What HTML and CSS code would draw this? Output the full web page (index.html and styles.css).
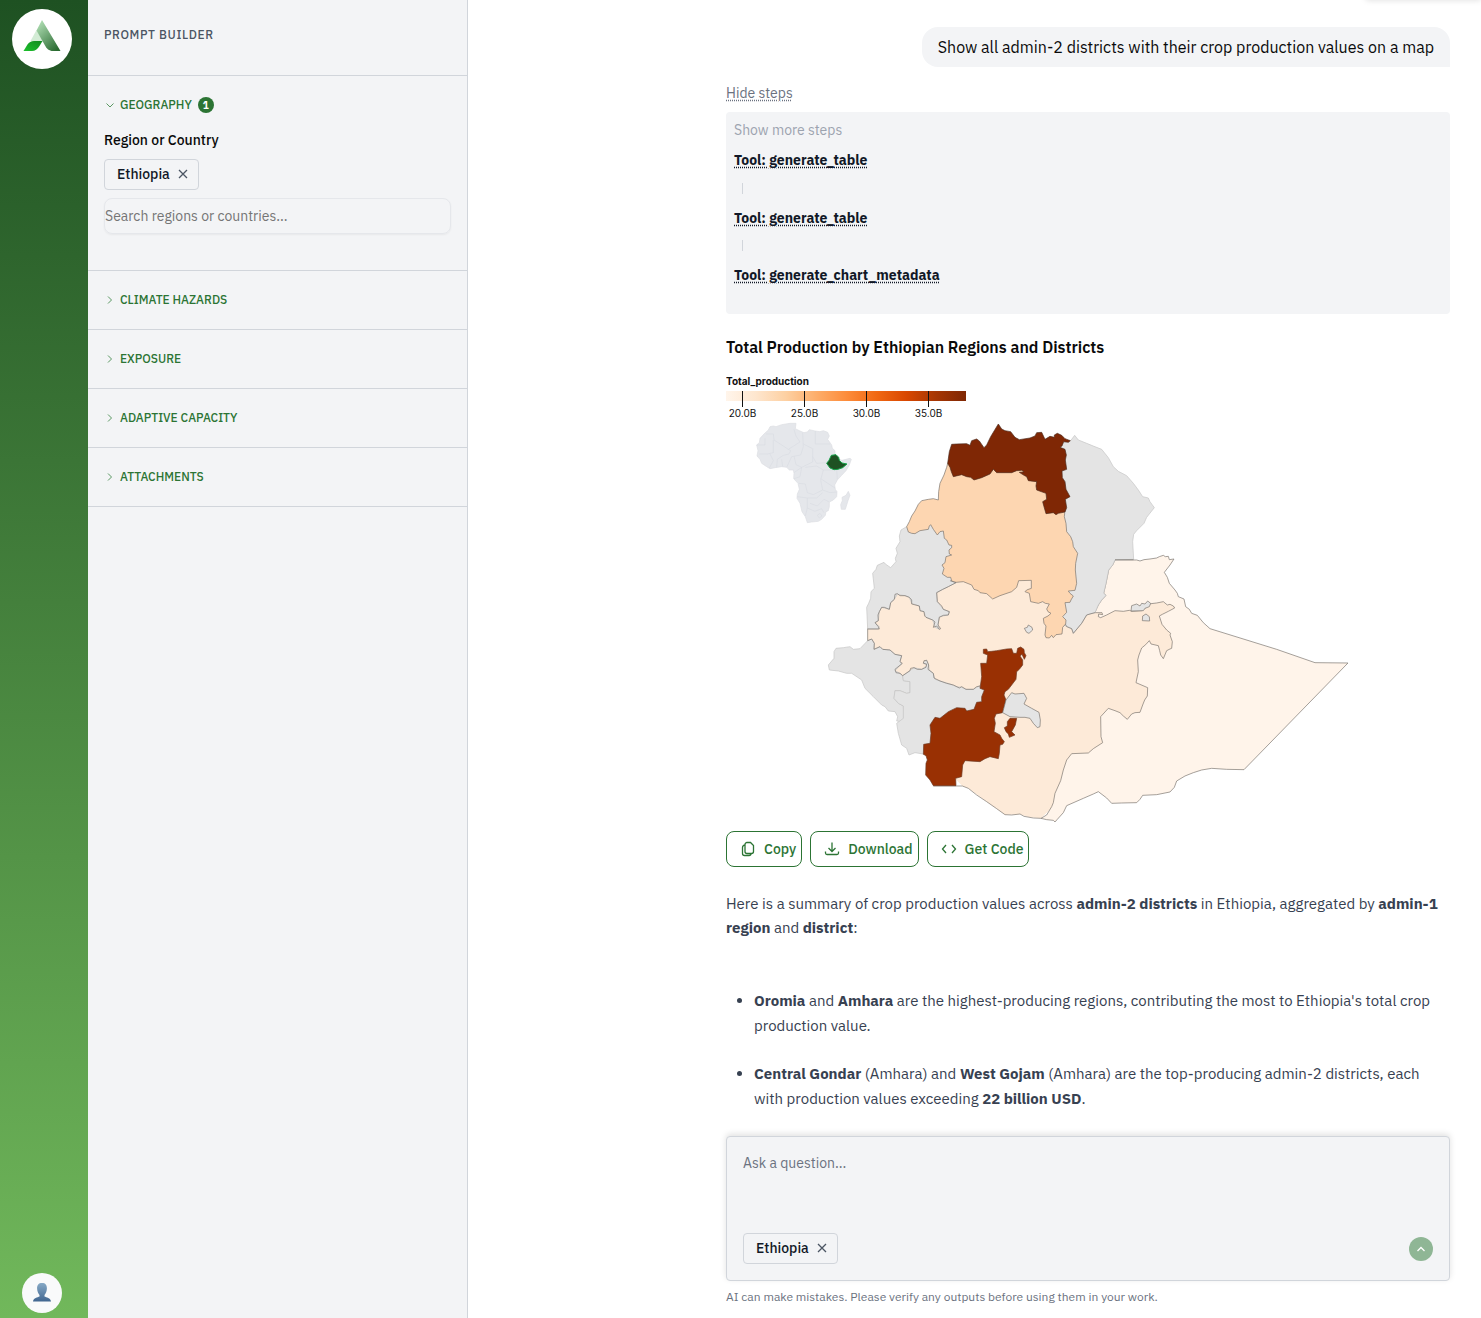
FILE: index.html
```html
<!DOCTYPE html>
<html lang="en">
<head>
<meta charset="utf-8">
<meta name="viewport" content="width=device-width, initial-scale=1">
<title>Prompt Builder</title>
<link rel="stylesheet" href="styles.css">
</head>
<body>
<div class="app">
  <nav class="rail" aria-label="Main">
    <a class="logo" href="#" aria-label="Home">
      <svg viewBox="0 0 60 60" width="60" height="60" aria-hidden="true">
        <defs>
          <linearGradient id="leg" x1="0.1" y1="0" x2="0.8" y2="1"><stop offset="0" stop-color="#b5e3b9"/><stop offset="1" stop-color="#2a6b31"/></linearGradient>
          <linearGradient id="leaf" x1="0" y1="1" x2="1" y2="0"><stop offset="0" stop-color="#1cc02c"/><stop offset="1" stop-color="#128a20"/></linearGradient>
        </defs>
        <path d="M24.500 21L31 32H18.500Z" fill="#d3ecd5"/>
        <path d="M30 11L48.500 42H41C37 42 34.500 39.500 33 36.500L24.500 21.500Z" fill="url(#leg)"/>
        <path d="M11.500 42L15.500 35.500Q17.800 32 22 32H30.500L27.500 37Q24.500 42 20 42Z" fill="url(#leaf)"/>
      </svg>
    </a>
    <button class="avatar" type="button" aria-label="Account">
      <svg viewBox="0 0 20 20" width="20" height="20" aria-hidden="true">
        <defs><linearGradient id="bust" x1="0" y1="0" x2="0" y2="1"><stop offset="0" stop-color="#86a9c6"/><stop offset="1" stop-color="#416690"/></linearGradient></defs>
        <path d="M10 0C13.400 0 15 2 14.900 5.500C14.800 8.500 13.800 10.500 12.500 12V13.500C14.500 14.500 18.500 14.500 19 18.500H1C1.500 14.500 5.500 14.500 7.500 13.500V12C6.200 10.500 5.200 8.500 5.100 5.500C5 2 6.600 0 10 0Z" fill="url(#bust)"/>
      </svg>
    </button>
  </nav>

  <aside class="builder">
    <header class="builder-head"><h2 class="builder-title">Prompt builder</h2></header>
    <section class="group">
      <button class="group-toggle" type="button" aria-expanded="true">
        <svg class="chevron" viewBox="0 0 12 12" aria-hidden="true"><path d="M2.500 4.500L6 8L9.500 4.500"/></svg>
        Geography <span class="count">1</span>
      </button>
      <div class="group-body">
        <label class="field-label" for="region">Region or Country</label>
        <button class="chip" type="button">Ethiopia
          <svg class="chip-x" viewBox="0 0 10 10" aria-hidden="true"><path d="M1 1L9 9M9 1L1 9"/></svg>
        </button>
        <input class="search" id="region" type="text" placeholder="Search regions or countries...">
      </div>
    </section>
    <section class="group"><button class="group-toggle" type="button" aria-expanded="false"><svg class="chevron" viewBox="0 0 12 12" aria-hidden="true"><path d="M4 2.500L7.500 6L4 9.500"/></svg>Climate hazards</button></section>
    <section class="group"><button class="group-toggle" type="button" aria-expanded="false"><svg class="chevron" viewBox="0 0 12 12" aria-hidden="true"><path d="M4 2.500L7.500 6L4 9.500"/></svg>Exposure</button></section>
    <section class="group"><button class="group-toggle" type="button" aria-expanded="false"><svg class="chevron" viewBox="0 0 12 12" aria-hidden="true"><path d="M4 2.500L7.500 6L4 9.500"/></svg>Adaptive capacity</button></section>
    <section class="group"><button class="group-toggle" type="button" aria-expanded="false"><svg class="chevron" viewBox="0 0 12 12" aria-hidden="true"><path d="M4 2.500L7.500 6L4 9.500"/></svg>Attachments</button></section>
  </aside>

  <main class="main">
    <div class="toast-edge"></div>
    <div class="thread">
      <p class="bubble">Show all admin-2 districts with their crop production values on a map</p>
      <a class="steps-toggle" href="#">Hide steps</a>
      <div class="steps">
        <button class="more" type="button">Show more steps</button>
        <ol class="step-list">
          <li class="step"><a class="tool" href="#">Tool: generate_table</a></li>
          <li class="step"><a class="tool" href="#">Tool: generate_table</a></li>
          <li class="step"><a class="tool" href="#">Tool: generate_chart_metadata</a></li>
        </ol>
      </div>
      <h3 class="chart-title">Total Production by Ethiopian Regions and Districts</h3>

      <svg class="map" viewBox="726 375 724 450" role="img" aria-label="Total production by region">
        <defs>
          <linearGradient id="scale">
            <stop offset="0" stop-color="#fff5eb"/><stop offset=".125" stop-color="#fee6ce"/><stop offset=".25" stop-color="#fdd0a2"/><stop offset=".375" stop-color="#fdae6b"/><stop offset=".5" stop-color="#fd8d3c"/><stop offset=".625" stop-color="#f16913"/><stop offset=".75" stop-color="#d94801"/><stop offset=".875" stop-color="#a63603"/><stop offset="1" stop-color="#7f2704"/>
          </linearGradient>
        </defs>
        <g class="legend">
          <text class="legend-title" x="726" y="385">Total_production</text>
          <rect x="726" y="391" width="240" height="10" fill="url(#scale)"/>
          <path class="tick" d="M742.500 391V407M804.500 391V407M866.500 391V407M928.500 391V407"/>
          <text x="742.500" y="417" text-anchor="middle">20.0B</text>
          <text x="804.500" y="417" text-anchor="middle">25.0B</text>
          <text x="866.500" y="417" text-anchor="middle">30.0B</text>
          <text x="928.500" y="417" text-anchor="middle">35.0B</text>
        </g>

        <!-- locator: Africa with Ethiopia highlighted -->
        <g transform="translate(720 330) scale(.333333)">
          <path class="africa" d="M110 345L118 338 120 325 132 312 145 300 150 290 160 288 168 290 185 284 210 280 228 280 226 296 240 303 252 308 262 306 268 299 285 303 300 305 310 302 323 307 328 318 323 328 335 345 337 355 345 362 345 375 358 388 366 391 390 385 394 388 388 405 378 422 365 436 352 450 344 465 346 478 351 485 350 500 340 510 328 516 328 530 325 542 318 545 316 556 305 568 295 574 275 576 262 578 256 560 246 545 240 520 231 505 232 492 238 478 234 460 221 446 222 430 220 420 208 420 200 412 185 410 165 413 150 416 140 410 125 400 120 388 111 378 114 362Z"/>
          <path class="africa" d="M385 484L390 496 384 512 376 538 364 538 362 524 367 512 366 502 378 496Z"/>
          <path class="africa-lines" d="M138 312L160 312 162 330 205 358 240 336 228 318 222 298M110 345H135V325M160 330V368L142 372 118 372M205 358L212 362 207 372 190 376 172 388 170 412M248 308L250 350 242 375 215 380 200 412M250 342L278 356V396M286 303V342H330M278 396L245 412 222 428M278 380L290 400 320 398M222 378L228 404 245 412 240 440 222 446M256 412L290 408 310 420 302 450 308 480 280 494 262 488 256 462 236 460M310 420H330L350 418 352 448M302 446L345 474M308 480L330 488 350 486M232 500L262 504 290 504 308 488M262 504V534L256 558M270 520L292 528 312 508 328 516M262 534L285 544 305 536 312 548M150 372L160 392 148 414M185 388L188 410M292 556L300 550 306 558 298 564Z"/>
          <path class="home" d="M320 400L327 391 334 376 348 374 356 382 358 391 366 399 381 402 368 413 354 418 342 419 330 414Z"/>
        </g>

        <!-- regions, drawn at three units to the pixel -->
        <g class="regions" transform="translate(820 410) scale(.333333)">
          <path class="oromia-fill" d="M143 610V700L200 800 300 1000 427 1128 445 1135 500 1175 555 1214 600 1213 625 1221 663 1225 900 1000 1100 800 1075 590 1000 560 860 580 760 640 710 600 650 500 400 500 230 555Z"/>
          <path class="line" d="M143 655V693M340 1128H427L445 1135 470 1155 500 1175 530 1196 555 1214 575 1215 600 1212 612 1219 640 1224 663 1225"/>
          <path class="somali edge" d="M885 450L940 450 950 450 960 453 972 449 990 447 1010 444 1018 440 1030 436 1036 440 1045 439 1048 449 1062 447 1050 465 1033 487 1042 502 1048 520 1065 540 1072 550 1075 560 1092 567 1097 590 1108 598 1115 610 1132 616 1150 638 1170 656 1370 718 1485 758 1584 759 1272 1079 1220 1078 1175 1075 1145 1080 1120 1088 1095 1098 1070 1113 1063 1132 1050 1146 1010 1154 968 1156 960 1168 950 1178 905 1179 875 1180 860 1164 835 1145 820 1152 790 1165 740 1187 730 1208 712 1228 705 1236 700 1231 680 1229 663 1225 680 1215 695 1190 700 1178 705 1150 722 1112 730 1080 740 1050 755 1031 805 1029 820 1016 848 998 843 980 842 920 865 895 885 902 900 908 910 918 922 928 935 912 945 908 960 907 968 885 974 870 982 858 983 833 948 818 955 785 953 750 957 735 965 714 977 704 988 692 993 702 1015 707 1019 722 1022 735 1030 746 1040 722 1050 717 1055 715 1057 695 1050 675 1052 670 1040 660 1026 643 1018 618 1027 613 1045 604 1064 594 1060 588 1050 583 1042 585 1030 575 1010 579 985 582 975 595 965 602 935 604 928 601 910 604 885 602 860 615 842 623 835 620 836 612 848 614 846 608 825 608 828 600 835 585 845 570 858 556 851 550 858 520 866 480 878 465Z"/>
          <path class="nodata" d="M742 92L752 92 764 76 775 90 800 100 822 109 845 118 865 143 880 170 895 184 920 197 940 220 955 240 968 260 985 264 990 275 1003 293 980 322 972 340 950 362 941 373 938 395 941 448 885 450 878 465 866 480 858 520 851 550 858 556 845 570 835 585 825 608 810 612 800 615 785 640 760 670 755 656 738 648 715 640 710 500 710 110Z"/>
          <path class="line" d="M941 449H885M825 608L810 612 800 615 785 640 760 670 755 656 740 650 735 640"/>
          <path class="nodata" d="M260 350L243 360 238 378 240 395 228 415 232 430 226 445 228 455 212 473 196 462 192 457 172 466 168 478 158 490 163 535 153 545 152 565 146 580 140 592 143 657 175 657 178 650 165 638 175 632 178 605 185 592 208 598 212 578 223 568 232 553 255 557 268 562 275 580 298 588 300 602 312 605 318 622 338 630 345 652 358 658 354 645 358 620 385 615 388 605 370 598 352 575 350 548 385 530 408 518 420 480 420 400 380 350 300 340Z"/>
          <path class="line" d="M143 657H178L175 650 165 638 175 632 174 615 178 605 185 592 193 592 208 598 212 578 223 568 225 553 232 551 240 557 255 557 268 562 275 570 275 582 298 588 300 602 312 605 314 618 318 622 338 630 345 636 340 652 350 648 358 658 362 656 354 645 358 622 370 616 385 615 388 605 370 598 365 588 352 575 350 548 368 538 385 530 408 518 390 512"/>
          <path class="amhara edge" d="M383 160L380 172 372 195 360 220 356 245 355 270 340 266 325 268 305 272 295 283 285 303 275 318 268 335 260 350 265 366 275 370 285 371 300 362 325 358 328 348 332 344 340 358 352 375 360 365 370 363 373 385 380 390 387 405 395 406 395 413 387 420 388 432 395 435 378 440 375 458 366 465 372 475 367 492 382 502 392 502 395 513 408 517 430 515 455 525 462 538 475 542 480 548 500 551 518 567 540 557 575 545 590 532 596 512 634 511 634 535 620 540 615 545 628 550 632 575 655 580 668 575 676 580 688 582 680 597 684 605 693 610 684 618 670 625 672 640 678 648 675 675 678 683 688 684 695 676 700 683 708 674 726 672 728 652 737 642 738 630 728 620 740 607 735 578 750 577 753 570 760 558 750 550 745 543 765 541 770 520 766 480 767 460 773 430 760 410 758 395 752 380 740 365 738 340 733 320 735 300 690 200 600 150 450 150Z"/>
          <path class="tigray edge" d="M383 160L388 125 395 103 410 102 440 101 450 106 455 92 470 87 478 93 492 113 500 105 512 80 535 42 545 57 555 62 572 65 585 82 598 89 630 84 645 78 650 68 665 67 675 88 690 79 703 82 703 75 712 70 725 76 735 86 751 92 745 97 731 95 726 108 720 112 735 118 739 135 736 150 740 178 726 183 727 203 735 215 738 238 750 260 736 268 740 293 735 306 715 310 708 314 700 308 678 311 672 290 668 275 680 268 678 250 650 240 648 228 650 215 625 212 620 200 612 196 598 187 612 186 605 181 590 182 575 188 530 188 520 178 510 192 485 203 462 210 452 202 440 200 425 194 400 200 394 185 390 172Z"/>
          <path class="nodata" d="M143 692L155 687 163 700 162 718 180 710 188 718 210 720 225 733 245 737 240 755 245 762 225 782 240 790 248 797 250 812 270 815 270 848 260 850 240 842 225 842 222 865 235 880 250 888 252 925 245 935 230 933 233 920 225 905 205 903 195 890 185 885 160 860 135 835 125 810 95 790 80 790 55 783 28 780 25 765 42 745 42 725 48 715 70 713 90 710 100 718 120 716Z"/>
          <path class="nodata" d="M248 797L270 782 282 773 305 778 320 767 310 758 320 750 326 765 328 780 340 790 345 808 390 822 410 830 425 832 438 838 460 838 480 827 510 850 400 1000 310 1032 285 1028 267 1035 260 1015 245 1005 235 970 230 940 250 925 250 888 235 880 222 865 225 842 240 842 260 850 270 848 270 815 250 812Z"/>
          <path class="line" d="M143 692L155 687 163 700 162 718 180 710 188 718 210 720 225 733 245 737 240 755 247 760 225 778 228 788 240 790 248 797 270 782 272 775 282 773 292 778 305 778 318 772 320 762 310 760 312 752 320 751 326 765 324 778 340 790 342 804 360 813 380 820 400 825 418 834 425 830 438 838 460 838 470 830 480 828"/>
          <path class="snnp edge" d="M490 718L500 717 503 725 515 724 530 722 560 717 575 716 580 730 590 730 593 715 602 711 612 718 613 728 618 737 613 748 606 733 600 738 608 750 608 765 598 778 590 785 588 808 575 825 565 838 555 845 552 855 558 870 548 908 528 912 523 925 526 940 522 965 540 975 545 985 553 995 548 1003 540 1005 538 1030 535 1046 510 1040 495 1046 480 1055 435 1052 428 1065 425 1100 407 1105 408 1127 340 1127 330 1110 317 1095 318 1060 322 1050 318 1037 310 1033 311 1003 330 1000 333 970 330 945 345 922 360 925 385 905 410 893 435 895 440 903 462 898 470 877 485 875 485 860 493 840 480 835 485 800 482 760 500 760 503 735 490 730Z"/>
          <path class="snnp edge" d="M570 925L590 925 586 945 575 965 585 975 568 982 565 972 558 965 553 953 562 948 562 935Z"/>
          <path class="nodata edge" d="M558 870L575 848 585 852 612 850 620 865 612 882 635 895 657 907 661 930 660 950 652 953 640 940 630 925 615 922 600 922 570 920 548 908Z"/>
          <path class="nodata edge" d="M933 603L935 587 950 582 960 588 965 580 975 582 983 573 992 580 988 590 975 595 970 602ZM967 632L968 618 978 612 988 620 989 633ZM613 655L622 652 625 645 636 652 638 660 627 670 620 667Z"/>
        </g>
      </svg>

      <div class="actions">
        <button class="action" type="button"><svg class="icon" viewBox="0 0 16 16" aria-hidden="true"><path d="M5 3.500A2 2 0 0 1 7 1.500H10.500L13.500 4.500V10.500A2 2 0 0 1 11.500 12.500H7A2 2 0 0 1 5 10.500ZM5 4A2.500 2.500 0 0 0 2.500 6.500V12.500A2 2 0 0 0 4.500 14.500H9A2 2 0 0 0 11 12.500"/></svg>Copy</button>
        <button class="action" type="button"><svg class="icon" viewBox="0 0 16 16" aria-hidden="true"><path d="M8 1.500V10.500M4.500 7L8 10.500L11.500 7M1.500 10.500V12A1.500 1.500 0 0 0 3 13.500H13A1.500 1.500 0 0 0 14.500 12V10.500"/></svg>Download</button>
        <button class="action" type="button"><svg class="icon" viewBox="0 0 16 16" aria-hidden="true"><path d="M5 4L1.500 8L5 12M11 4L14.500 8L11 12"/></svg>Get Code</button>
      </div>

      <div class="answer">
        <p class="lead">Here is a summary of crop production values across <strong>admin-2 districts</strong> in Ethiopia, aggregated by <strong>admin-1 region</strong> and <strong>district</strong>:</p>
        <ul class="points">
          <li><strong>Oromia</strong> and <strong>Amhara</strong> are the highest-producing regions, contributing the most to Ethiopia's total crop production value.</li>
          <li><strong>Central Gondar</strong> (Amhara) and <strong>West Gojam</strong> (Amhara) are the top-producing admin-2 districts, each with production values exceeding <strong>22 billion USD</strong>.</li>
        </ul>
      </div>
    </div>

    <div class="dock">
      <form class="composer">
        <textarea class="question" rows="2" placeholder="Ask a question..." aria-label="Ask a question"></textarea>
        <div class="composer-row">
          <button class="chip" type="button">Ethiopia
            <svg class="chip-x" viewBox="0 0 10 10" aria-hidden="true"><path d="M1 1L9 9M9 1L1 9"/></svg>
          </button>
          <button class="send" type="submit" aria-label="Send"><svg viewBox="0 0 12 12" width="12" height="12" aria-hidden="true"><path d="M2.500 8L6 4.500L9.500 8"/></svg></button>
        </div>
      </form>
      <p class="notice">AI can make mistakes. Please verify any outputs before using them in your work.</p>
    </div>
  </main>
</div>
</body>
</html>
```
FILE: styles.css
```css
* { box-sizing: border-box; }
body { margin: 0; font-family: "IBM Plex Sans", Roboto, sans-serif; color: #0a0a0a; background: #fff; }
h2, h3, p, ul, ol { margin: 0; padding: 0; }
button, input, textarea { font: inherit; color: inherit; }
button { cursor: pointer; }

.app { display: flex; min-height: 100vh; }

.rail { flex: 0 0 88px; display: flex; flex-direction: column; justify-content: space-between; padding: 9px 12px 5px; background: linear-gradient(#1e5122, #71b85b); }
.logo { display: block; width: 60px; height: 60px; border-radius: 50%; background: #fff; }
.avatar { width: 40px; height: 40px; margin-left: 10px; padding: 0; border: 0; border-radius: 50%; background: #f9fafb; display: grid; place-items: center; }

.builder { flex: 0 0 380px; background: #f3f4f6; border-right: 1px solid #d1d5db; }
.builder-head { padding: 25px 16px 30px; border-bottom: 1px solid #d1d5db; }
.builder-title { font-size: 12px; line-height: 20px; font-weight: 500; text-transform: uppercase; letter-spacing: .05em; color: #4b5563; }
.group { border-bottom: 1px solid #d1d5db; }
.group-toggle { display: flex; align-items: center; gap: 4px; width: 100%; padding: 20px 16px; border: 0; background: none; color: #2c7434; font-size: 12px; line-height: 18px; font-weight: 500; text-transform: uppercase; }
.group-toggle[aria-expanded="true"] { padding-bottom: 16px; }
.chevron { width: 12px; height: 12px; fill: none; stroke: #5a9862; stroke-width: 1; }
.count { display: grid; place-items: center; width: 16px; height: 16px; margin-left: 2px; border-radius: 50%; background: #2c7434; color: #fff; font-size: 10px; font-weight: 700; }
.group-body { padding: 0 16px 36px; }
.field-label { display: block; margin-bottom: 9px; font-size: 14px; line-height: 20px; font-weight: 500; }
.chip { display: inline-flex; align-items: center; gap: 8px; height: 31px; padding: 0 10px 1px 12px; border: 1px solid #d1d5db; border-radius: 4px; background: #f3f4f6; color: #111827; font-size: 14px; font-weight: 500; }
.chip-x { width: 10px; height: 10px; fill: none; stroke: #4b5563; stroke-width: 1.3; }
.search { display: block; width: 100%; height: 36px; margin-top: 8px; padding: 0; border: 1px solid #e5e7eb; border-radius: 8px; background: transparent; box-shadow: 0 1px 2px rgba(0, 0, 0, .05); font-size: 14px; }
.search::placeholder { color: #757575; }

.main { flex: 1; min-width: 0; display: flex; flex-direction: column; justify-content: space-between; padding: 27px 31px 0; position: relative; overflow: hidden; }
.toast-edge { position: absolute; top: -8px; right: 0; width: 115px; height: 8px; box-shadow: 0 0 6px rgba(0, 0, 0, .14); }
.thread, .dock { width: 100%; max-width: 724px; margin-left: auto; }
.thread { display: flex; flex-direction: column; align-items: flex-start; }
.bubble { align-self: flex-end; padding: 8px 16px; border-radius: 16px 16px 0 16px; background: #f3f4f6; font-size: 16px; line-height: 24px; }
.steps-toggle { margin: 16px 0 9px; font-size: 14px; line-height: 20px; color: #6b7280; text-decoration: underline dotted; text-underline-offset: 2px; }
.steps { width: 100%; padding: 8px 8px 29px; border-radius: 4px; background: #f3f4f6; }
.more { display: block; padding: 0; border: 0; background: none; color: #9ca3af; font-size: 14px; line-height: 20px; }
.step-list { list-style: none; margin-top: 10px; }
.step { font-size: 14px; line-height: 20px; }
.step + .step::before { content: ""; display: block; width: 1px; height: 11px; margin: 13px 8px 14px; background: #d1d5db; }
.step:last-child::before { margin-top: 12px; }
.tool { color: #111827; font-weight: 700; text-decoration: underline dotted; text-underline-offset: 2px; }
.chart-title { margin: 21px 0 16px; font-size: 16px; line-height: 24px; font-weight: 600; }

.map { display: block; width: 100%; height: auto; }
.legend { font-family: Inter, sans-serif; font-size: 10px; fill: #111; }
.legend-title { font-weight: 700; }
.tick { stroke: #111; fill: none; }
.africa { fill: #e5e7eb; stroke: #dcdee3; stroke-width: 2; }
.africa-lines { fill: none; stroke: #d9dce2; stroke-width: 2; }
.home { fill: #1e5122; stroke: #16a34a; stroke-width: 3; }
.regions { stroke-linejoin: round; }
.nodata { fill: #e4e4e4; stroke: #c4c4c4; stroke-width: 2; }
.edge, .line { stroke: #77716b; stroke-width: 2; }
.line { fill: none; }
.oromia-fill { fill: #fdead8; }
.somali { fill: #fff4ea; }
.amhara { fill: #fdd6b1; }
.tigray { fill: #7f2705; stroke: #4b2a1c; }
.snnp { fill: #993003; stroke: #6b3a24; }

.actions { display: flex; gap: 8px; margin: 6px 0 25px; }
.action { display: flex; align-items: center; gap: 8px; height: 36px; padding: 0 5px 0 13px; border: 1px solid #2c7434; border-radius: 8px; background: #fff; color: #2c7434; font-size: 14px; font-weight: 500; }
.icon { width: 16px; height: 16px; fill: none; stroke: currentColor; stroke-width: 1.3; }

.answer { font-size: 15px; line-height: 25px; color: #374151; }
.answer strong { font-weight: 700; }
.lead { line-height: 24px; }
.points { margin-top: 48px; padding-left: 28px; }
.points li + li { margin-top: 23px; }

.composer { display: flex; flex-direction: column; gap: 8px; padding: 16px; border: 1px solid #d1d5db; border-radius: 4px; background: #f3f4f6; box-shadow: 0 -2px 6px rgba(0, 0, 0, .12); }
.question { height: 72px; padding: 0; border: 0; resize: none; background: transparent; font-size: 14px; line-height: 20px; }
.question::placeholder { color: #6b7280; }
.composer-row { display: flex; align-items: center; justify-content: space-between; }
.send { display: grid; place-items: center; width: 24px; height: 24px; padding: 0; border: 0; border-radius: 50%; background: #8fb695; }
.send path { fill: none; stroke: #fff; stroke-width: 1.3; }
.notice { padding: 7px 0 12px; font-size: 12px; line-height: 18px; color: #6b7280; }
```
